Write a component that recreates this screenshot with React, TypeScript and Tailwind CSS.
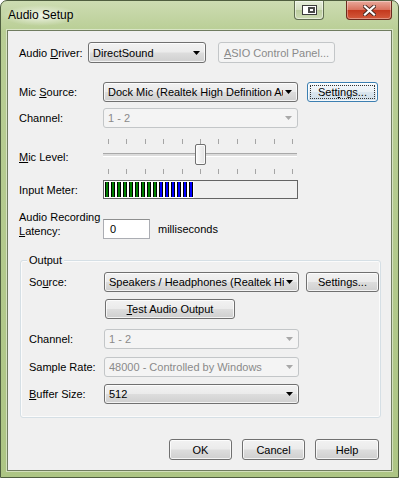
import React from 'react';

const raised =
  'border border-[#707070] bg-[linear-gradient(#f2f2f2_0%,#ebebeb_48%,#dddddd_52%,#cfcfcf_100%)] shadow-[inset_0_0_0_1px_rgba(255,255,255,0.75)]';
const flat = 'border border-[#c3c6c8] bg-[#f4f4f4] text-[#8a8a8a]';

function Arrow({ disabled }: { disabled?: boolean }) {
  return (
    <svg width="7" height="4" viewBox="0 0 7 4" className="ml-[2px] shrink-0">
      <path d="M0 0h7L3.5 4z" fill={disabled ? '#a8a8a8' : '#000'} />
    </svg>
  );
}

function Combo({ value, w, disabled }: { value: string; w: string; disabled?: boolean }) {
  return (
    <div
      className={`flex h-[20px] shrink-0 items-center rounded-[3px] pl-[4px] pr-[5px] ${w} ${
        disabled ? flat : raised + ' text-black'
      }`}
    >
      <span className="flex-1 overflow-hidden whitespace-nowrap">{value}</span>
      <Arrow disabled={disabled} />
    </div>
  );
}

function Btn({
  children,
  w,
  disabled,
  focused,
}: {
  children: React.ReactNode;
  w: string;
  disabled?: boolean;
  focused?: boolean;
}) {
  if (disabled) {
    return (
      <div className={`flex h-[20px] shrink-0 items-center justify-center whitespace-nowrap rounded-[3px] ${w} ${flat}`}>
        {children}
      </div>
    );
  }
  if (focused) {
    return (
      <div
        className={`relative flex h-[20px] shrink-0 items-center justify-center whitespace-nowrap rounded-[3px] border border-[#3c7fb1] bg-[linear-gradient(#f4f8fb_0%,#e9f0f5_48%,#dae6ef_52%,#cfdde8_100%)] shadow-[inset_0_0_0_1px_rgba(255,255,255,0.8)] ${w}`}
      >
        <div className="absolute inset-[2px] border border-dotted border-[#333]" />
        {children}
      </div>
    );
  }
  return (
    <div className={`flex h-[20px] shrink-0 items-center justify-center whitespace-nowrap rounded-[3px] ${w} ${raised}`}>
      {children}
    </div>
  );
}

const U = ({ c }: { c: string }) => <span className="underline underline-offset-[1px]">{c}</span>;

const bars = [
  'bg-[#008000]', 'bg-[#008000]', 'bg-[#008000]', 'bg-[#008000]', 'bg-[#008000]',
  'bg-[#008000]', 'bg-[#008000]', 'bg-[#008000]', 'bg-[#008000]',
  'bg-[#0000ff]', 'bg-[#0000ff]', 'bg-[#0000ff]', 'bg-[#0000ff]', 'bg-[#0000ff]', 'bg-[#0000ff]',
];

function Ticks() {
  return (
    <div className="ml-[5px] flex h-[5px] w-[185px] justify-between">
      {Array.from({ length: 11 }).map((_, i) => (
        <div key={i} className="h-full w-[1px] bg-[#a5a5a5]" />
      ))}
    </div>
  );
}

export default function App() {
  return (
    <div className="h-[478px] w-[399px] rounded-t-[7px] border border-[#4f5e3f] bg-[linear-gradient(#cddcb2_0px,#b9ce95_30px,#adc584_478px)] font-['Liberation_Sans',Arial,sans-serif] text-[11px] leading-[14px] text-black">
      {/* title bar */}
      <div className="flex h-[29px] items-start">
        <div className="ml-[1px] mt-[4px] rounded-full bg-[radial-gradient(closest-side,rgba(255,255,255,0.75),rgba(255,255,255,0))] px-[6px] py-[3px] text-[12px] leading-[15px]">
          Audio Setup
        </div>
        <div className="ml-auto flex gap-[22px] pr-[6px]">
          <div className="flex h-[19px] w-[30px] items-center justify-center rounded-b-[4px] border border-t-0 border-[#5f6c50] bg-[linear-gradient(#e6eedb_0%,#d3dfc1_48%,#bccd9f_52%,#cddbb4_100%)] shadow-[inset_0_0_0_1px_rgba(255,255,255,0.5)]">
            <svg width="15" height="10" viewBox="0 0 15 10">
              <rect x="0.5" y="0.5" width="14" height="9" fill="#fff" stroke="#3c3c3c" />
              <rect x="6" y="2" width="7" height="6" fill="#4a4a4a" />
              <rect x="8" y="4" width="3" height="2" fill="#fff" />
            </svg>
          </div>
          <div className="flex h-[19px] w-[46px] items-center justify-center rounded-b-[4px] border border-t-0 border-[#6b2a1e] bg-[linear-gradient(#e9a99b_0%,#d9735f_48%,#c4391e_52%,#d45a3c_100%)] shadow-[inset_0_0_0_1px_rgba(255,255,255,0.35)]">
            <svg width="13" height="11" viewBox="0 0 13 11">
              <path d="M2 1.5L11 9.5M11 1.5L2 9.5" stroke="#4a2a22" strokeWidth="4" strokeLinecap="square" />
              <path d="M2 1.5L11 9.5M11 1.5L2 9.5" stroke="#fff" strokeWidth="2.2" strokeLinecap="square" />
            </svg>
          </div>
        </div>
      </div>

      {/* client area */}
      <div className="ml-[6px] h-[441px] w-[385px] border border-[#707c60] bg-[#f0f0f0] pl-[11px] pr-[12px] pt-[11px] shadow-[0_0_0_1px_rgba(255,255,255,0.45)]">
        {/* driver */}
        <div className="flex h-[21px] items-center">
          <div className="w-[69px] shrink-0 whitespace-nowrap">
            Audio <U c="D" />river:
          </div>
          <div className={`flex h-[21px] w-[118px] shrink-0 items-center rounded-[3px] pl-[4px] pr-[5px] ${raised}`}>
            <span className="flex-1">DirectSound</span>
            <Arrow />
          </div>
          <div className="ml-[12px]">
            <Btn w="w-[117px] h-[21px]" disabled>
              <span>
                <U c="A" />SIO Control Panel...
              </span>
            </Btn>
          </div>
        </div>

        {/* mic source */}
        <div className="mt-[19px] flex h-[20px] items-center">
          <div className="w-[84px] shrink-0 whitespace-nowrap">
            Mic <U c="S" />ource:
          </div>
          <Combo value="Dock Mic (Realtek High Definition Au" w="w-[195px]" />
          <div className="ml-[9px]">
            <Btn w="w-[71px]" focused>
              Sett<U c="i" />ngs...
            </Btn>
          </div>
        </div>

        {/* channel */}
        <div className="mt-[6px] flex h-[20px] items-center">
          <div className="w-[84px] shrink-0">Channel:</div>
          <Combo value="1 - 2" w="w-[195px]" disabled />
        </div>

        {/* mic level */}
        <div className="mt-[8px] flex h-[36px]">
          <div className="w-[84px] shrink-0 pt-[14px]">
            <U c="M" />ic Level:
          </div>
          <div className="relative w-[195px] pt-[3px]">
            <Ticks />
            <div className="mt-[9px] h-[4px] w-[194px] border-t border-b border-t-[#a9a9a9] border-b-white bg-[#dcdcdc]" />
            <div className="mt-[12px]">
              <Ticks />
            </div>
            <div className="absolute left-[92px] top-[8px] h-[21px] w-[11px] rounded-[2px] border border-[#707070] bg-[linear-gradient(90deg,#fbfbfb,#e3e3e3)] shadow-[inset_0_0_0_1px_rgba(255,255,255,0.8)]" />
          </div>
        </div>

        {/* input meter */}
        <div className="mt-[8px] flex h-[19px] items-center">
          <div className="w-[84px] shrink-0">Input Meter:</div>
          <div className="flex h-[19px] w-[195px] shrink-0 border border-[#646464] bg-[#f0f0f0]">
            <div className="flex h-full gap-[2px] bg-white px-[1px] py-[1px]">
              {bars.map((c, i) => (
                <div key={i} className={`h-full w-[4px] border-x border-black ${c}`} />
              ))}
            </div>
          </div>
        </div>

        {/* latency */}
        <div className="mt-[11px] flex">
          <div className="w-[84px] shrink-0 whitespace-nowrap leading-[14px]">
            Audio Recording
            <br />
            <U c="L" />atency:
          </div>
          <div className="mt-[9px] flex items-center">
            <div className="flex h-[20px] w-[47px] items-center border border-[#abadb3] border-t-[#8e8f8f] bg-white pl-[6px]">
              0
            </div>
            <span className="ml-[8px]">milliseconds</span>
          </div>
        </div>

        {/* output group */}
        <div className="relative ml-[1px] mt-[21px] w-[361px] rounded-[3px] border border-[#d5dfe5] px-[8px] pb-[13px] pt-[11px] shadow-[inset_0_0_0_1px_rgba(255,255,255,0.7)]">
          <span className="absolute left-[6px] top-[-8px] bg-[#f0f0f0] px-[2px]">Output</span>
          <div className="flex h-[20px] items-center">
            <div className="w-[75px] shrink-0">
              So<U c="u" />rce:
            </div>
            <Combo value="Speakers / Headphones (Realtek Hig" w="w-[195px]" />
            <div className="ml-[7px]">
              <Btn w="w-[73px]">Settings...</Btn>
            </div>
          </div>
          <div className="ml-[76px] mt-[7px]">
            <Btn w="w-[130px]">
              <span>
                <U c="T" />est Audio Output
              </span>
            </Btn>
          </div>
          <div className="mt-[10px] flex h-[20px] items-center">
            <div className="w-[75px] shrink-0">Channel:</div>
            <Combo value="1 - 2" w="w-[195px]" disabled />
          </div>
          <div className="mt-[8px] flex h-[20px] items-center">
            <div className="w-[75px] shrink-0 whitespace-nowrap">Sample Rate:</div>
            <Combo value="48000 - Controlled by Windows" w="w-[195px]" disabled />
          </div>
          <div className="mt-[7px] flex h-[20px] items-center">
            <div className="w-[75px] shrink-0">
              <U c="B" />uffer Size:
            </div>
            <Combo value="512" w="w-[195px]" />
          </div>
        </div>

        {/* dialog buttons */}
        <div className="mt-[21px] flex justify-end gap-[10px]">
          <Btn w="w-[63px] h-[21px]">OK</Btn>
          <Btn w="w-[63px] h-[21px]">Cancel</Btn>
          <Btn w="w-[64px] h-[21px]">Help</Btn>
        </div>
      </div>
    </div>
  );
}
